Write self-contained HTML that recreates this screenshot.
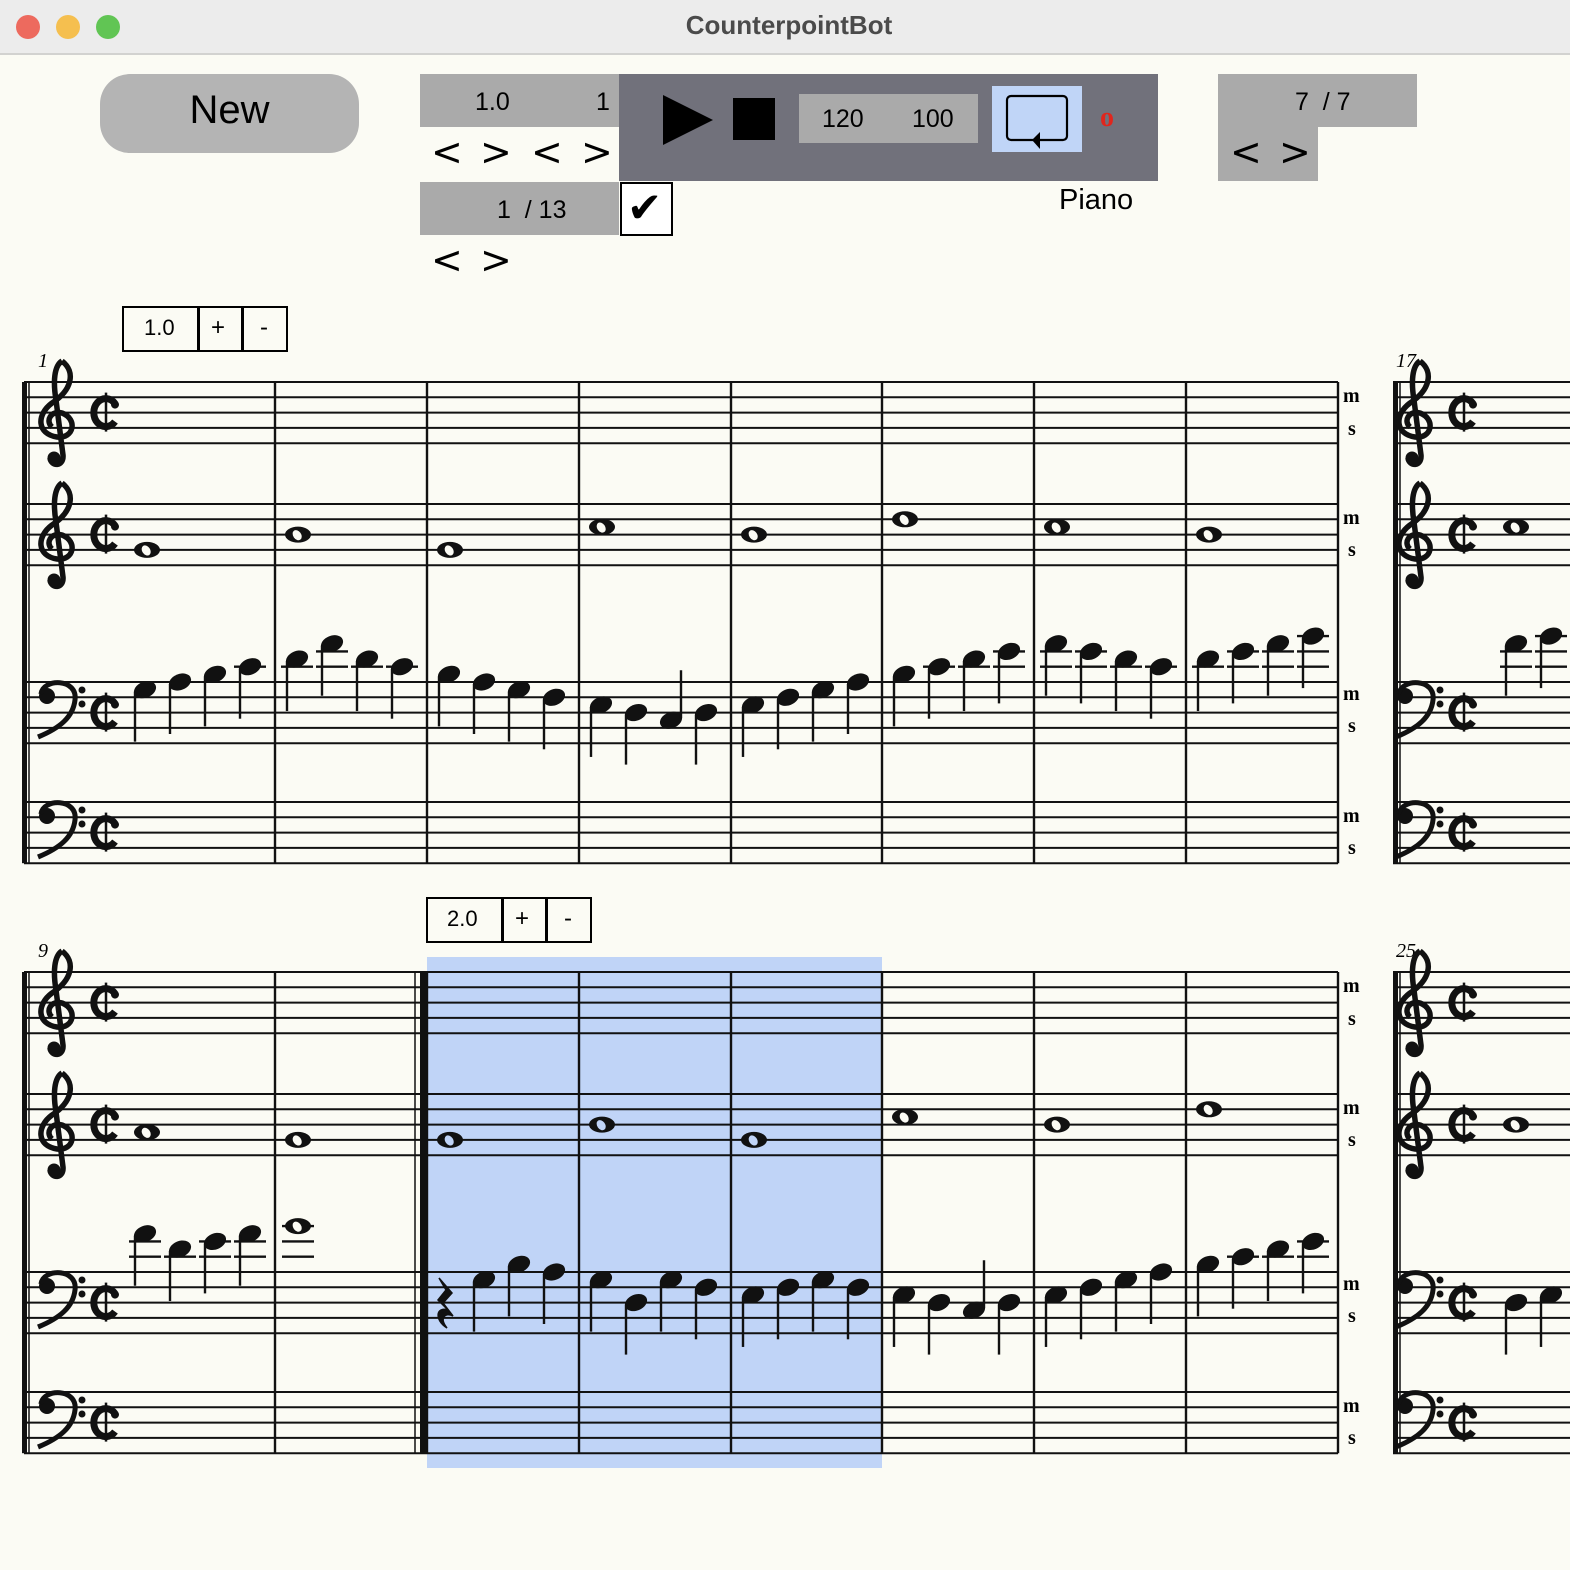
<!DOCTYPE html>
<html><head><meta charset="utf-8">
<style>
html,body{margin:0;padding:0;width:1570px;height:1570px;overflow:hidden;background:#fbfbf4;font-family:"Liberation Sans",sans-serif;}
.a{position:absolute;}
.t{position:absolute;white-space:nowrap;color:#000;}
.ch{font-size:38px;font-family:'DejaVu Sans',sans-serif;}
</style></head><body>
<div class="a" style="left:0;top:0;width:1570px;height:53px;background:#ececec;border-bottom:2px solid #d2d2d0;"></div>
<div class="a" style="left:16px;top:15px;width:24px;height:24px;border-radius:50%;background:#ed6a5e;"></div>
<div class="a" style="left:56px;top:15px;width:24px;height:24px;border-radius:50%;background:#f5bf4f;"></div>
<div class="a" style="left:96px;top:15px;width:24px;height:24px;border-radius:50%;background:#61c554;"></div>
<div class="t" style="left:0;width:1578px;text-align:center;top:10px;font-size:26px;font-weight:bold;color:#4b4b4b;">CounterpointBot</div>

<div class="a" style="left:100px;top:74px;width:259px;height:79px;border-radius:30px;background:#b4b4b4;"></div>
<div class="t" style="left:100px;width:259px;text-align:center;top:88px;font-size:40px;">New</div>

<div class="a" style="left:420px;top:74px;width:199px;height:53px;background:#aaaaaa;"></div>
<div class="t" style="left:475px;top:88px;font-size:25px;">1.0</div>
<div class="t" style="left:596px;top:88px;font-size:25px;">1</div>
<div class="t ch" style="left:431px;top:130px;">&lt;</div>
<div class="t ch" style="left:480px;top:130px;">&gt;</div>
<div class="t ch" style="left:531px;top:130px;">&lt;</div>
<div class="t ch" style="left:581px;top:130px;">&gt;</div>

<div class="a" style="left:619px;top:74px;width:539px;height:107px;background:#71717b;"></div>
<svg class="a" style="left:0;top:0" width="1570" height="260">
<polygon points="663,95 713,120 663,145" fill="#000"/>
<rect x="733" y="98" width="42" height="42" fill="#000"/>
</svg>
<div class="a" style="left:799px;top:94px;width:179px;height:49px;background:#aaaaaa;"></div>
<div class="t" style="left:822px;top:105px;font-size:25px;">120</div>
<div class="t" style="left:912px;top:105px;font-size:25px;">100</div>
<div class="a" style="left:992px;top:86px;width:90px;height:66px;background:#c0d5f7;"></div>
<svg class="a" style="left:992px;top:86px" width="90" height="66">
<rect x="15" y="10" width="60" height="44" rx="4" fill="none" stroke="#000" stroke-width="2.2"/>
<polygon points="40,54 48,46 48,63" fill="#000"/>
</svg>
<div class="t" style="left:1100px;top:102px;font-size:28px;font-weight:bold;font-family:'Liberation Serif',serif;color:#e0261d;">o</div>

<div class="a" style="left:420px;top:182px;width:199px;height:53px;background:#aaaaaa;"></div>
<div class="t" style="left:497px;top:196px;font-size:25px;">1&nbsp; / 13</div>
<div class="a" style="left:620px;top:182px;width:49px;height:50px;border:2px solid #000;background:#fff;"></div>
<div class="t" style="left:627px;top:183px;font-size:42px;font-family:'DejaVu Sans',sans-serif;">✔</div>
<div class="t ch" style="left:431px;top:238px;">&lt;</div>
<div class="t ch" style="left:480px;top:238px;">&gt;</div>
<div class="t" style="left:1059px;top:184px;font-size:29px;">Piano</div>

<div class="a" style="left:1218px;top:74px;width:199px;height:53px;background:#aaaaaa;"></div>
<div class="a" style="left:1218px;top:127px;width:100px;height:54px;background:#aaaaaa;"></div>
<div class="t" style="left:1295px;top:88px;font-size:25px;">7&nbsp; / 7</div>
<div class="t ch" style="left:1230px;top:130px;">&lt;</div>
<div class="t ch" style="left:1279px;top:130px;">&gt;</div>

<div class="a" style="left:427px;top:957px;width:455px;height:511px;background:#c0d4f7;"></div>

<div class="a" style="left:122px;top:306px;width:162px;height:42px;border:2px solid #000;"></div>
<div class="a" style="left:197px;top:306px;width:1px;height:44px;background:#000;border-left:2px solid #000;"></div>
<div class="a" style="left:241px;top:306px;width:1px;height:44px;background:#000;border-left:2px solid #000;"></div>
<div class="t" style="left:144px;top:315px;font-size:22px;">1.0</div>
<div class="t" style="left:211px;top:314px;font-size:24px;">+</div>
<div class="t" style="left:260px;top:314px;font-size:24px;">-</div>

<div class="a" style="left:426px;top:897px;width:162px;height:42px;border:2px solid #000;"></div>
<div class="a" style="left:501px;top:897px;width:1px;height:44px;background:#000;border-left:2px solid #000;"></div>
<div class="a" style="left:545px;top:897px;width:1px;height:44px;background:#000;border-left:2px solid #000;"></div>
<div class="t" style="left:447px;top:906px;font-size:22px;">2.0</div>
<div class="t" style="left:515px;top:905px;font-size:24px;">+</div>
<div class="t" style="left:564px;top:905px;font-size:24px;">-</div>

<div class="t" style="left:38px;top:350px;font-size:20px;font-style:italic;font-family:'Liberation Serif',serif;">1</div>
<div class="t" style="left:38px;top:940px;font-size:20px;font-style:italic;font-family:'Liberation Serif',serif;">9</div>
<div class="t" style="left:1396px;top:350px;font-size:20px;font-style:italic;font-family:'Liberation Serif',serif;">17</div>
<div class="t" style="left:1396px;top:940px;font-size:20px;font-style:italic;font-family:'Liberation Serif',serif;">25</div>

<div style="font-family:'Liberation Serif',serif;font-weight:bold;font-size:20px;">
<div class="t" style="left:1343px;top:385px;">m</div><div class="t" style="left:1348px;top:418px;">s</div>
<div class="t" style="left:1343px;top:507px;">m</div><div class="t" style="left:1348px;top:539px;">s</div>
<div class="t" style="left:1343px;top:683px;">m</div><div class="t" style="left:1348px;top:715px;">s</div>
<div class="t" style="left:1343px;top:805px;">m</div><div class="t" style="left:1348px;top:837px;">s</div>
<div class="t" style="left:1343px;top:975px;">m</div><div class="t" style="left:1348px;top:1008px;">s</div>
<div class="t" style="left:1343px;top:1097px;">m</div><div class="t" style="left:1348px;top:1129px;">s</div>
<div class="t" style="left:1343px;top:1273px;">m</div><div class="t" style="left:1348px;top:1305px;">s</div>
<div class="t" style="left:1343px;top:1395px;">m</div><div class="t" style="left:1348px;top:1427px;">s</div>
</div>

<svg id="sc" class="a" style="left:0;top:0" width="1570" height="1570"></svg>
<script>
var S=document.getElementById('sc'),h='';
var SP=15.3,HS=SP/2,BG='#fbfbf4',HL='#c0d4f7';
function L(x1,y1,x2,y2,w){h+='<line x1="'+x1+'" y1="'+y1+'" x2="'+x2+'" y2="'+y2+'" stroke="#111" stroke-width="'+(w||2)+'"/>';}
function treble(x,T){h+='<g transform="translate('+(x-40)+','+(T-382)+')"><path d="M62 361 C76 372 72 390 52 403 C36 415 37 434 57 437 C74 439 78 419 62 413 C51 410 45 421 52 427 M62 361 C54 366 53 382 56 400 L63 455 C64 467 51 467 50 458" fill="none" stroke="#111" stroke-width="5.5"/><circle cx="54" cy="458" r="6.5" fill="#111"/></g>';}
function bass(x,T){h+='<g transform="translate('+(x-40)+','+(T-682)+')"><circle cx="47" cy="696" r="8" fill="#111"/><path d="M41 694 C43 678 78 678 75 700 C73 717 60 728 38 737" fill="none" stroke="#111" stroke-width="5"/><circle cx="82" cy="690" r="3.5" fill="#111"/><circle cx="82" cy="704" r="3.5" fill="#111"/></g>';}
function cut(x,T){var c=T+2*SP;h+='<path d="M'+(x+14)+' '+(c-9)+' A12 14 0 1 0 '+(x+14)+' '+(c+9)+'" fill="none" stroke="#111" stroke-width="7"/><circle cx="'+(x+14)+'" cy="'+(c-8)+'" r="4" fill="#111"/>';L(x+5,c-20,x+5,c+19,2.5);}
function ledg(x,T,s){for(var k=-2;k>=s;k-=2){var y=T+k*HS;L(x-16,y,x+16,y,2.4);}}
function q(x,T,s,up){var y=T+s*HS;ledg(x,T,s);
 h+='<ellipse cx="'+x+'" cy="'+y+'" rx="11.5" ry="8" transform="rotate(-22 '+x+' '+y+')" fill="#111"/>';
 if(up)L(x+10,y-2,x+10,y-50,2.4);else L(x-10,y+2,x-10,y+52,2.4);}
function w(x,T,s,bg){var y=T+s*HS;ledg(x,T,s);
 h+='<ellipse cx="'+x+'" cy="'+y+'" rx="13" ry="8" fill="#111"/><ellipse cx="'+(x-1)+'" cy="'+y+'" rx="4" ry="5.5" transform="rotate(-35 '+x+' '+y+')" fill="'+(bg||BG)+'"/>';}
var bars=[275,427,579,731,882,1034,1186,1338];
var sys=[0,590];
sys.forEach(function(o){
 var T=[382+o,504+o,682+o,802+o];
 T.forEach(function(t){for(var i=0;i<5;i++){L(24,t+i*SP,1338,t+i*SP,2);L(1393,t+i*SP,1570,t+i*SP,2);}});
 var top=T[0],bot=T[3]+4*SP;
 h+='<rect x="22" y="'+top+'" width="5" height="'+(bot-top)+'" fill="#111"/>';L(29,top,29,bot,1.5);
 h+='<rect x="1393" y="'+top+'" width="5" height="'+(bot-top)+'" fill="#111"/>';L(1400,top,1400,bot,1.5);
 bars.forEach(function(b){L(b,top,b,bot,2.4);});
 [40,1398].forEach(function(cx){treble(cx,T[0]);treble(cx,T[1]);bass(cx,T[2]);bass(cx,T[3]);
  T.forEach(function(t){cut(cx+61,t);});});
});
L(415,972,415,1453,1.5);h+='<rect x="420" y="972" width="6" height="481" fill="#111"/>';
var off=[22,57,92,127],m1=[145,180,215,250];
function xs(mi){return mi==0?m1:off.map(function(d){return bars[mi-1]+d;});}
function wx(mi){return mi==0?147:bars[mi-1]+23;}
var T2=504,T3=682;
[6,4,6,3,4,2,3,4].forEach(function(s,i){w(wx(i),T2,s);});
var Q1=[[1,0,-1,-2],[-3,-5,-3,-2],[-1,0,1,2],[3,4,5,4],[3,2,1,0],[-1,-2,-3,-4],[-5,-4,-3,-2],[-3,-4,-5,-6]];
Q1.forEach(function(m,i){var X=xs(i);m.forEach(function(s,j){q(X[j],T3,s,(i==3&&j==2));});});
w(1516,T2,3);q(1516,T3,-5);q(1551,T3,-6);
T2=1094;T3=1272;
[5,6,6,4,6,3,4,2].forEach(function(s,i){w(wx(i),T2,s,(i>=2&&i<=4)?HL:BG);});
var Q2=[[-5,-3,-4,-5],null,[null,1,-1,0],[1,4,1,2],[3,2,1,2],[3,4,5,4],[3,2,1,0],[-1,-2,-3,-4]];
Q2.forEach(function(m,i){if(!m)return;var X=xs(i);m.forEach(function(s,j){if(s===null)return;q(X[j],T3,s,(i==5&&j==2));});});
w(298,T3,-6);
h+='<path d="M439 1278 L452 1293 L443 1303 L453 1316 C445 1312 439 1318 447 1328 C434 1320 436 1306 448 1310 L438 1300 L446 1290 Z" fill="#111" stroke="#111" stroke-width="1.5"/>';
w(1516,T2,4);q(1516,T3,4);q(1551,T3,3);
S.innerHTML=h;
</script>
</body></html>
